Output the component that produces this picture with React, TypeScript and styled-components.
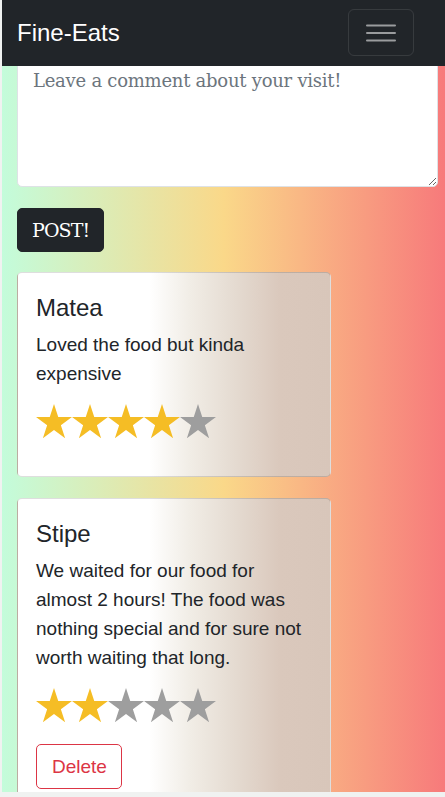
import React from "react";
import styled, { createGlobalStyle } from "styled-components";

const GlobalStyle = createGlobalStyle`
  html, body { margin: 0; padding: 0; }
  body {
    font-family: "Liberation Sans", Arial, sans-serif;
    color: #212529;
    background: #f0f2f1;
    overflow: hidden;
  }
  * { box-sizing: border-box; }
`;

const Page = styled.div`
  min-height: 100vh;
  margin-left: 2px;
  padding: 55px 7px 40px 15px;
  background: linear-gradient(to right, #c3fcdb 0%, #fad889 50%, #f77a7b 100%);
`;

const Navbar = styled.nav`
  position: fixed;
  top: 0;
  left: 2px;
  right: 0;
  height: 66px;
  background: #212529;
  display: flex;
  align-items: center;
  justify-content: space-between;
  padding: 0 31px 0 15px;
  z-index: 10;
`;

const Brand = styled.a`
  color: #fff;
  font-size: 24px;
  line-height: 1;
  text-decoration: none;
  margin-top: -1px;
`;

const Toggler = styled.button`
  width: 66px;
  height: 47px;
  margin-top: -1px;
  background: transparent;
  border: 1px solid rgba(255, 255, 255, 0.1);
  border-radius: 6px;
  display: flex;
  align-items: center;
  justify-content: center;
  padding: 0;
`;

const CommentBox = styled.textarea`
  display: block;
  width: 100%;
  height: 132px;
  padding: 10px 15px 8px;
  font-family: "DejaVu Serif", "Liberation Serif", serif;
  font-size: 18px;
  letter-spacing: -0.25px;
  line-height: 30px;
  color: #212529;
  background: #fff;
  border: 1px solid #dee2e6;
  border-radius: 5px;
  resize: vertical;
  &::placeholder { color: #6c757d; }
`;

const PostButton = styled.button`
  display: block;
  margin-top: 21px;
  height: 44px;
  padding: 0 14px;
  font-family: "DejaVu Serif", "Liberation Serif", serif;
  font-size: 19px;
  letter-spacing: -0.9px;
  color: #fff;
  background: #212529;
  border: 1px solid #212529;
  border-radius: 5px;
`;

const CardList = styled.div`
  display: flex;
  flex-direction: column;
  gap: 21px;
  margin-top: 20px;
`;

const Card = styled.div`
  width: 314px;
  padding: 20px 18px 16px;
  border: 1px solid rgba(0, 0, 0, 0.13);
  border-radius: 5px;
  background: linear-gradient(to right, #ffffff 42%, #f1ede6 55%, #e4dad0 70%, #dac8bc 84%, #d8c6ba 100%);
`;

const Name = styled.h4`
  margin: 0 0 8px;
  font-size: 24px;
  font-weight: 400;
  line-height: 29px;
`;

const Comment = styled.p`
  margin: 0 0 15px;
  font-size: 19px;
  line-height: 29px;
`;

const Stars = styled.div`
  display: flex;
  margin-top: 6px;
  height: 57px;
`;

const StarIcon = styled.svg<{ $on: boolean }>`
  width: 36px;
  height: 36px;
  fill: ${(p) => (p.$on ? "#f5bd25" : "#9e9e9e")};
`;

const DeleteButton = styled.button`
  display: block;
  height: 45px;
  padding: 0 14px 0 15px;
  font-family: "Liberation Sans", Arial, sans-serif;
  font-size: 19px;
  color: #dc3545;
  background: transparent;
  border: 1px solid #dc3545;
  border-radius: 5px;
`;

const ScrollTrack = styled.div`
  position: fixed;
  left: 0;
  right: 0;
  bottom: 0;
  height: 5px;
  background: #f0f2f1;
`;

const Star = ({ on }: { on: boolean }) => (
  <StarIcon $on={on} viewBox="0 0 36 36">
    <polygon points="18,1 22.24,14.06 35.97,14.06 24.87,22.13 29.11,35.19 18,27.12 6.89,35.19 11.13,22.13 0.03,14.06 13.76,14.06" />
  </StarIcon>
);

const Hamburger = () => (
  <svg width="30" height="30" viewBox="0 0 30 30">
    <path
      d="M1 7.5h28M1 15h28M1 22.5h28"
      stroke="rgba(255,255,255,0.55)"
      strokeWidth="2"
      strokeLinecap="round"
    />
  </svg>
);

const reviews = [
  { name: "Matea", text: "Loved the food but kinda expensive", rating: 4, own: false },
  {
    name: "Stipe",
    text: "We waited for our food for almost 2 hours! The food was nothing special and for sure not worth waiting that long.",
    rating: 2,
    own: true,
  },
];

export default function App() {
  return (
    <>
      <GlobalStyle />
      <Navbar>
        <Brand href="#">Fine-Eats</Brand>
        <Toggler aria-label="Toggle navigation">
          <Hamburger />
        </Toggler>
      </Navbar>
      <Page>
        <CommentBox placeholder="Leave a comment about your visit!" />
        <PostButton>POST!</PostButton>
        <CardList>
          {reviews.map((r) => (
            <Card key={r.name}>
              <Name>{r.name}</Name>
              <Comment>{r.text}</Comment>
              <Stars>
                {[1, 2, 3, 4, 5].map((i) => (
                  <Star key={i} on={i <= r.rating} />
                ))}
              </Stars>
              {r.own && <DeleteButton>Delete</DeleteButton>}
            </Card>
          ))}
        </CardList>
      </Page>
      <ScrollTrack />
    </>
  );
}
